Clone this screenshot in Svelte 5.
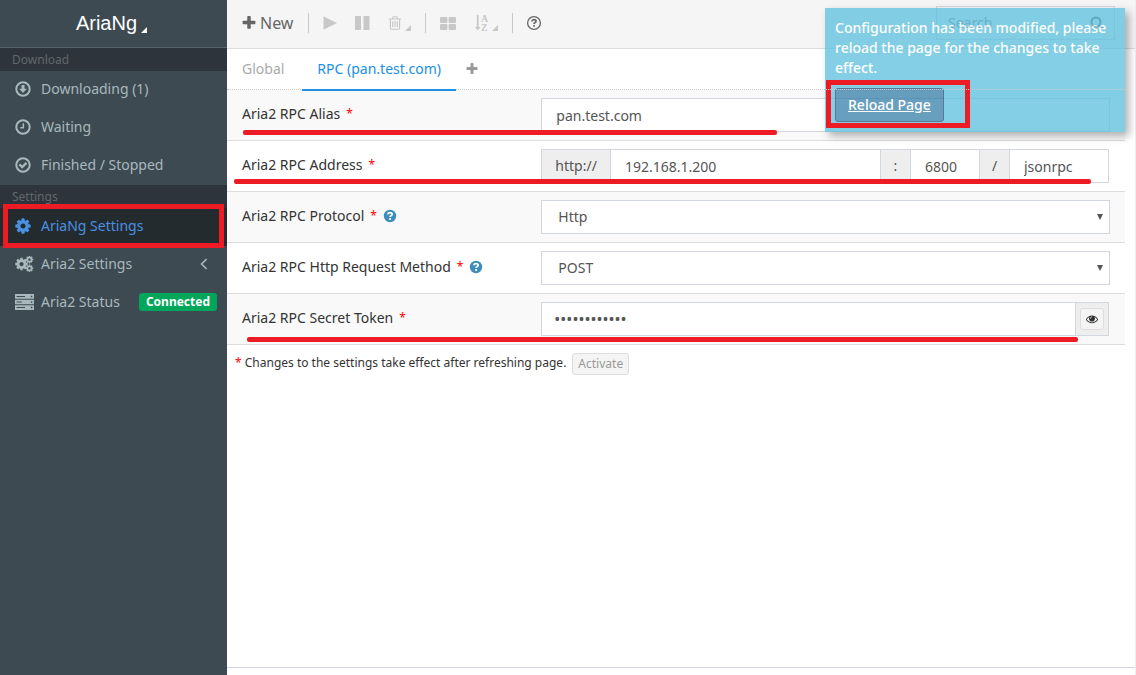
<script lang="ts">
	// AriaNg settings page, RPC tab

	let alias = $state('pan.test.com');
	let host = $state('192.168.1.200');
	let port = $state('6800');
	let path = $state('jsonrpc');
	let protocol = $state('Http');
	let method = $state('POST');
	let secret = $state('aria2-secret');
	let showSecret = $state(false);
	let search = $state('');

	const gear =
		'M1152 896q0-106-75-181t-181-75-181 75-75 181 75 181 181 75 181-75 75-181zm512-109v222q0 12-8 23t-20 13l-185 28q-19 54-39 91 35 50 107 138 10 12 10 25t-9 23q-27 37-99 108t-94 71q-12 0-26-9l-138-108q-44 23-91 38-16 136-29 186-7 28-36 28h-222q-14 0-24.5-8.5t-11.5-21.5l-28-184q-49-16-90-37l-141 107q-10 9-25 9-14 0-25-11-126-114-165-168-7-10-7-23 0-12 8-23 15-21 51-66.5t54-70.5q-27-50-41-99l-183-27q-13-2-21-12.5t-8-23.5v-222q0-12 8-23t19-13l186-28q14-46 39-92-40-57-107-138-10-12-10-24 0-10 9-23 26-36 98.5-107.5t94.5-71.5q13 0 26 10l138 107q44-23 91-38 16-136 29-186 7-28 36-28h222q14 0 24.5 8.5t11.5 21.5l28 184q49 16 90 37l142-107q9-9 24-9 13 0 25 10 129 119 165 170 7 8 7 22 0 12-8 23-15 21-51 66.5t-54 70.5q26 50 41 98l183 28q13 2 21 12.5t8 23.5z';
	const plus =
		'M1600 736v192q0 40-28 68t-68 28h-416v416q0 40-28 68t-68 28h-192q-40 0-68-28t-28-68v-416h-416q-40 0-68-28t-28-68v-192q0-40 28-68t68-28h416v-416q0-40 28-68t68-28h192q40 0 68 28t28 68v416h416q40 0 68 28t28 68z';
	const trash =
		'M704 736v576q0 14-9 23t-23 9h-64q-14 0-23-9t-9-23v-576q0-14 9-23t23-9h64q14 0 23 9t9 23zm256 0v576q0 14-9 23t-23 9h-64q-14 0-23-9t-9-23v-576q0-14 9-23t23-9h64q14 0 23 9t9 23zm256 0v576q0 14-9 23t-23 9h-64q-14 0-23-9t-9-23v-576q0-14 9-23t23-9h64q14 0 23 9t9 23zm128 724v-948h-896v948q0 22 7 40.5t14.5 27 10.5 8.5h832q3 0 10.5-8.5t14.5-27 7-40.5zm-672-1076h448l-48-117q-7-9-17-11h-317q-10 2-17 11zm928 32v64q0 14-9 23t-23 9h-96v948q0 83-47 143.5t-113 60.5h-832q-66 0-113-58.5t-47-141.5v-952h-96q-14 0-23-9t-9-23v-64q0-14 9-23t23-9h309l70-167q15-37 54-63t79-26h320q40 0 79 26t54 63l70 167h309q14 0 23 9t9 23z';
	const eye =
		'M1664 960q-152-236-381-353 61 104 61 225 0 185-131.5 316.5t-316.5 131.5-316.5-131.5-131.5-316.5q0-121 61-225-229 117-381 353 133 205 333.5 326.5t434.5 121.5 434.5-121.5 333.5-326.5zm-720-384q0-20-14-34t-34-14q-125 0-214.5 89.5t-89.5 214.5q0 20 14 34t34 14 34-14 14-34q0-86 61-147t147-61q20 0 34-14t14-34zm848 384q0 34-20 69-140 230-376.5 368.5t-499.5 138.5-499.5-139-376.5-368q-20-35-20-69t20-69q140-229 376.5-368t499.5-139 499.5 139 376.5 368q20 35 20 69z';
</script>

{#snippet corner()}
	<svg class="corner" viewBox="0 0 6 6"><path d="M6 0v6H0z" /></svg>
{/snippet}

{#snippet help()}
	<svg class="help" viewBox="0 0 14 14" aria-hidden="true">
		<circle cx="7" cy="7" r="6.2" />
		<path class="hook" d="M4.7 5.4q.4-1.8 2.3-1.8 2.2 0 2.2 1.7 0 .9-1.2 1.5-.9.4-.9 1.2" />
		<path class="dot" d="M6.1 9.1h2v1.8h-2z" />
	</svg>
{/snippet}

<div class="page">
	<aside class="sidebar">
		<a class="logo" href="#about">AriaNg{@render corner()}</a>
		<nav>
			<h2>Download</h2>
			<a class="item" href="#downloading">
				<svg class="icon" viewBox="0 0 16 16">
					<circle class="ring" cx="8" cy="8" r="6.7" />
					<path d="M6.5 4h3v3.8h2.4L8 11.9 4.1 7.8h2.4z" />
				</svg>
				<span>Downloading (1)</span>
			</a>
			<a class="item" href="#waiting">
				<svg class="icon" viewBox="0 0 16 16">
					<circle class="ring" cx="8" cy="8" r="6.7" />
					<path d="M7.6 4.2h1.5v5.2H5.3V8h2.3z" />
				</svg>
				<span>Waiting</span>
			</a>
			<a class="item" href="#stopped">
				<svg class="icon" viewBox="0 0 16 16">
					<circle class="ring" cx="8" cy="8" r="6.7" />
					<path d="M3.6 8.2l1.6-1.6 2 2 3.5-3.5 1.6 1.6-5.1 5.1z" />
				</svg>
				<span>Finished / Stopped</span>
			</a>
			<h2>Settings</h2>
			<a class="item active" href="#settings">
				<svg class="icon" viewBox="96 96 1600 1600"><path d={gear} /></svg>
				<span>AriaNg Settings</span>
				<i class="mark box-item"></i>
			</a>
			<a class="item" href="#aria2">
				<svg class="icon wide" viewBox="0 0 20 18">
					<g transform="translate(-1.6 .8) scale(0.0092)"><path d={gear} /></g>
					<g transform="translate(10.6 -1) scale(0.0056)"><path d={gear} /></g>
					<g transform="translate(10.6 8.8) scale(0.0056)"><path d={gear} /></g>
				</svg>
				<span>Aria2 Settings</span>
				<svg class="angle" viewBox="0 0 8 12"><path d="M6.6 1L1.6 6l5 5" /></svg>
			</a>
			<a class="item" href="#status">
				<svg class="icon wide" viewBox="0 0 18 15">
					<path
						fill-rule="evenodd"
						d="M0 0h18v4.4H0zM0 5.3h18v4.4H0zM0 10.6h18V15H0zM1.5 1.7v1h8v-1zM1.5 7v1h5V7zM1.5 12.3v1h8v-1zM15 1.5v1.4h1.4V1.5zM15 6.8v1.4h1.4V6.8zM15 12.1v1.4h1.4v-1.4z"
					/>
				</svg>
				<span>Aria2 Status</span>
				<span class="badge">Connected</span>
			</a>
		</nav>
	</aside>

	<main>
		<header class="toolbar">
			<button class="new">
				<svg class="i14" viewBox="128 128 1536 1536"><path d={plus} /></svg>
				New
			</button>
			<div class="tools">
				<button disabled aria-label="Start">
					<svg class="i14" viewBox="0 0 14 14"><path d="M.5.3L14 7 .5 13.7z" /></svg>
				</button>
				<button disabled aria-label="Pause">
					<svg class="i14" viewBox="0 0 14 14"><path d="M0 0h6v14H0zM8.5 0h6v14h-6z" /></svg>
				</button>
				<button disabled aria-label="Delete">
					<svg class="i16" viewBox="0 0 1792 1792"><path d={trash} /></svg>{@render corner()}
				</button>
			</div>
			<div class="tools">
				<button disabled aria-label="Select all">
					<svg class="i16" viewBox="0 0 16 16">
						<rect x="0" y="2" width="7.4" height="6" rx="1" />
						<rect x="8.6" y="2" width="7.4" height="6" rx="1" />
						<rect x="0" y="9" width="7.4" height="6" rx="1" />
						<rect x="8.6" y="9" width="7.4" height="6" rx="1" />
					</svg>
				</button>
				<button disabled aria-label="Sort">
					<svg class="i16" viewBox="0 0 16 18">
						<path d="M2.2 0h2v13.4h2.3l-3.3 3.8L-.1 13.4h2.3z" />
						<text x="7" y="8">A</text>
						<text x="7" y="18">Z</text>
					</svg>{@render corner()}
				</button>
			</div>
			<div class="tools">
				<button class="about" aria-label="Help">
					<svg class="i14" viewBox="0 0 14 14">
						<circle cx="7" cy="7" r="6.4" />
						<path class="hook" d="M4.8 5.5q.4-1.9 2.2-1.9 2.1 0 2.1 1.7 0 .9-1.2 1.5-.9.4-.9 1.3" />
						<path class="dot" d="M6.2 9.1h1.6v1.6H6.2z" />
					</svg>
				</button>
			</div>
			<label class="search">
				<input type="text" placeholder="Search" aria-label="Search" bind:value={search} />
				<svg class="i14" viewBox="0 0 14 14"><circle cx="7" cy="6" r="4.5" /><path d="M10.5 9.5l3 3" /></svg>
			</label>
		</header>

		<div class="tabs">
			<a href="#global">Global</a>
			<a class="current" href="#rpc">RPC ({alias})</a>
			<button aria-label="Add RPC">
				<svg viewBox="128 128 1536 1536"><path d={plus} /></svg>
			</button>
		</div>

		<form>
			<div class="row">
				<label for="alias">Aria2 RPC Alias <em>*</em></label>
				<div class="field"><input id="alias" type="text" bind:value={alias} /></div>
				<i class="mark line-alias"></i>
			</div>
			<div class="row">
				<label for="host">Aria2 RPC Address <em>*</em></label>
				<div class="field group">
					<span class="addon">http://</span>
					<input id="host" type="text" bind:value={host} />
					<span class="addon sep">:</span>
					<input class="port" type="text" aria-label="Port" bind:value={port} />
					<span class="addon sep">/</span>
					<input class="path" type="text" aria-label="Path" bind:value={path} />
				</div>
				<i class="mark line-address"></i>
			</div>
			<div class="row">
				<label for="protocol">Aria2 RPC Protocol <em>*</em> {@render help()}</label>
				<div class="field">
					<select id="protocol" bind:value={protocol}>
						<option>Http</option>
						<option>WebSocket</option>
					</select>
					<svg class="caret" viewBox="0 0 6 6"><path d="M0 0h6L3 6z" /></svg>
				</div>
			</div>
			<div class="row">
				<label for="method">Aria2 RPC Http Request Method <em>*</em> {@render help()}</label>
				<div class="field">
					<select id="method" bind:value={method}>
						<option>POST</option>
						<option>GET</option>
					</select>
					<svg class="caret" viewBox="0 0 6 6"><path d="M0 0h6L3 6z" /></svg>
				</div>
			</div>
			<div class="row">
				<label for="secret">Aria2 RPC Secret Token <em>*</em></label>
				<div class="field group">
					<input id="secret" type={showSecret ? 'text' : 'password'} bind:value={secret} />
					<span class="addon reveal">
						<button type="button" aria-label="Show token" onclick={() => (showSecret = !showSecret)}>
							<svg viewBox="0 0 1792 1792"><path d={eye} /></svg>
						</button>
					</span>
				</div>
				<i class="mark line-secret"></i>
			</div>
			<p class="note">
				<span><em>*</em> Changes to the settings take effect after refreshing page.</span>
				<button type="button" disabled>Activate</button>
			</p>
		</form>
		<footer></footer>
	</main>

	<div class="toast" role="alert">
		<p>Configuration has been modified, please reload the page for the changes to take effect.</p>
		<a href="#reload">Reload Page</a>
	</div>
	<i class="mark box-reload"></i>
</div>

<style>
	:global(body) {
		background: #fff;
		color: #333;
		font: 14px/20px 'Noto Sans', 'Open Sans', sans-serif;
	}

	* {
		box-sizing: border-box;
	}

	button,
	input,
	select {
		font: inherit;
		color: inherit;
		margin: 0;
	}

	button {
		background: none;
		border: 0;
		padding: 0;
	}

	a {
		text-decoration: none;
	}

	em {
		color: #f00;
		font-size: 12px;
		font-style: normal;
	}

	svg {
		display: block;
		flex: none;
		fill: currentColor;
	}

	.page {
		position: relative;
		display: flex;
		min-height: 100vh;
	}

	/* Sidebar */
	.sidebar {
		flex: none;
		width: 227px;
		background: #3d4a52;
		color: #a9b8bd;
	}

	.logo {
		display: flex;
		align-items: center;
		justify-content: center;
		height: 48px;
		padding: 0 4px 2px 0;
		border-bottom: 1px solid #54646c;
		color: #fff;
		font: 20px/24px 'Liberation Sans', sans-serif;
	}

	.corner {
		width: 6px;
		height: 6px;
		margin-left: 4px;
		align-self: flex-end;
	}

	.logo .corner {
		margin-bottom: 12px;
	}

	h2 {
		margin: 0;
		padding-left: 12px;
		height: 23px;
		background: #2d343c;
		color: #62686c;
		font-size: 12px;
		font-weight: 400;
		line-height: 23px;
	}

	.item {
		position: relative;
		display: flex;
		align-items: center;
		height: 38px;
		padding: 0 10px 2px 15px;
		color: inherit;
	}

	.item.active {
		background: #242b2f;
		color: #4a90e2;
	}

	.icon {
		width: 16px;
		height: 16px;
		margin-right: 10px;
	}

	.icon.wide {
		width: 19px;
		margin-right: 7px;
	}

	.ring {
		fill: none;
		stroke: currentColor;
		stroke-width: 2;
	}

	.angle {
		width: 8px;
		height: 12px;
		margin-left: auto;
		margin-right: 9px;
		fill: none;
		stroke: currentColor;
		stroke-width: 1.6;
	}

	.badge {
		margin-left: auto;
		padding: 0 7px;
		border-radius: 3px;
		background: #00a65a;
		color: #fff;
		font-size: 12px;
		font-weight: 700;
		line-height: 18px;
	}

	/* Toolbar */
	main {
		display: flex;
		flex: 1;
		flex-direction: column;
		min-width: 0;
		border-right: 1px solid #eee;
	}

	.toolbar {
		display: flex;
		align-items: center;
		height: 49px;
		padding: 0 20px 2px 15px;
		border-bottom: 1px solid #ddd;
		background: #f5f5f5;
		color: #666;
	}

	.toolbar button {
		display: flex;
		align-items: center;
	}

	.new {
		gap: 4px;
		margin-right: 15px;
		font-size: 16px;
	}

	.i14 {
		width: 14px;
		height: 14px;
		overflow: visible;
	}

	.i16 {
		width: 16px;
		height: 16px;
		overflow: visible;
	}

	.i16 text {
		font: 700 11px 'Liberation Serif', serif;
	}

	.tools {
		display: flex;
		align-items: center;
		gap: 18px;
		height: 20px;
		margin-right: 14px;
		padding-left: 14px;
		border-left: 1px solid #c8c8c8;
	}

	.tools button:disabled {
		color: #c8c8c8;
	}

	.tools .corner {
		margin-left: 2px;
	}

	.about circle {
		fill: none;
		stroke: currentColor;
		stroke-width: 1.3;
	}

	.hook {
		fill: none;
		stroke: currentColor;
		stroke-width: 1.7;
	}

	.search {
		display: flex;
		align-items: center;
		width: 179px;
		height: 34px;
		margin-left: auto;
		padding: 0 11px;
		border: 1px solid #d2d6de;
	}

	.search input {
		flex: 1;
		min-width: 0;
		padding: 0;
		border: 0;
		background: none;
	}

	.search input::placeholder {
		color: #888;
	}

	.search svg {
		fill: none;
		stroke: currentColor;
		stroke-width: 2;
	}

	/* Tabs */
	.tabs {
		position: relative;
		z-index: 1;
		display: flex;
		gap: 3px;
		height: 41px;
		margin-right: 10px;
		border-bottom: 1px dotted #ccc;
		line-height: 40px;
	}

	.tabs a {
		height: 42px;
		padding: 0 15px;
		color: #aaa;
	}

	.tabs .current {
		border-bottom: 2px solid #208fe5;
		color: #208fe5;
	}

	.tabs button {
		padding: 0 7px;
		color: #999;
	}

	.tabs svg {
		width: 12px;
		height: 12px;
	}

	/* Setting rows */
	form {
		flex: 1;
		margin-right: 10px;
	}

	.row {
		position: relative;
		display: grid;
		grid-template-columns: 1fr 2fr;
		padding: 8px 0;
		border-bottom: 1px solid #ddd;
	}

	.row:nth-child(odd) {
		background: #f9f9f9;
	}

	.row label {
		display: flex;
		align-items: center;
		gap: 6px;
		height: 32px;
		padding: 0 15px;
	}

	.help {
		width: 14px;
		height: 14px;
		color: #3c8dbc;
	}

	.help .hook {
		stroke: #fff;
	}

	.help .dot {
		fill: #fff;
	}

	.field {
		position: relative;
		display: flex;
		min-width: 0;
		padding: 0 15px;
		color: #555;
	}

	.group {
		padding-right: 16px;
	}

	.field input,
	.field select {
		flex: 1;
		min-width: 0;
		height: 34px;
		padding: 0 14px;
		border: 1px solid #d2d6de;
		border-radius: 0;
		outline: 0;
		background: #fff;
		appearance: none;
	}

	.field select {
		padding: 0 16px;
	}

	.field input[type='password'] {
		padding: 0 12px;
		font-size: 16px;
	}

	.field .port {
		flex: none;
		width: 70px;
	}

	.field .path {
		flex: none;
		width: 100px;
	}

	.addon {
		padding: 0 13px;
		border: 1px solid #d2d6de;
		background: #eee;
		line-height: 32px;
	}

	.addon.sep {
		width: 31px;
		padding: 0;
		text-align: center;
	}

	.addon + input,
	input + .addon {
		margin-left: -1px;
	}

	.caret {
		position: absolute;
		top: 14px;
		right: 22px;
		width: 6px;
		height: 6px;
		pointer-events: none;
	}

	.reveal {
		display: flex;
		align-items: center;
		padding: 0 4px;
	}

	.reveal button,
	.note button {
		border: 1px solid #ddd;
		border-radius: 3px;
		background: #f4f4f4;
	}

	.reveal button {
		padding: 4px 5px;
		color: #333;
	}

	.reveal svg {
		width: 12px;
		height: 12px;
	}

	.note {
		display: flex;
		gap: 6px;
		margin: 0;
		padding: 8px;
		font-size: 12px;
	}

	.note button {
		height: 22px;
		padding: 0 5px;
		color: #999;
	}

	footer {
		height: 8px;
		border-top: 1px solid #d2d6de;
	}

	/* Notification */
	.toast {
		position: absolute;
		top: 8px;
		right: 11px;
		width: 300px;
		padding: 10px;
		background: #5bc0de;
		box-shadow: 4px 4px 8px rgba(0, 0, 0, 0.4);
		color: #fff;
		font-weight: 500;
		opacity: 0.75;
	}

	.toast p {
		margin: 0 0 10px;
	}

	.toast a {
		display: inline-block;
		padding: 6px 12px;
		border: 1px solid #204d74;
		border-radius: 3px;
		background: #367fa9;
		color: #fff;
		text-decoration: underline;
	}

	/* Red highlights */
	.mark {
		position: absolute;
		height: 5px;
		border-radius: 2px;
		background: #ed1c24;
		pointer-events: none;
	}

	.box-item,
	.box-reload {
		height: auto;
		border: 5px solid #ed1c24;
		border-radius: 0;
		background: none;
	}

	.box-item {
		inset: -4px 3px -2px;
	}

	.box-reload {
		top: 80px;
		right: 166px;
		width: 144px;
		height: 48px;
	}

	.line-alias {
		bottom: 5px;
		left: 16px;
		width: 534px;
	}

	.line-address {
		bottom: 7px;
		left: 7px;
		width: 857px;
	}

	.line-secret {
		bottom: 2px;
		left: 20px;
		width: 831px;
	}
</style>
